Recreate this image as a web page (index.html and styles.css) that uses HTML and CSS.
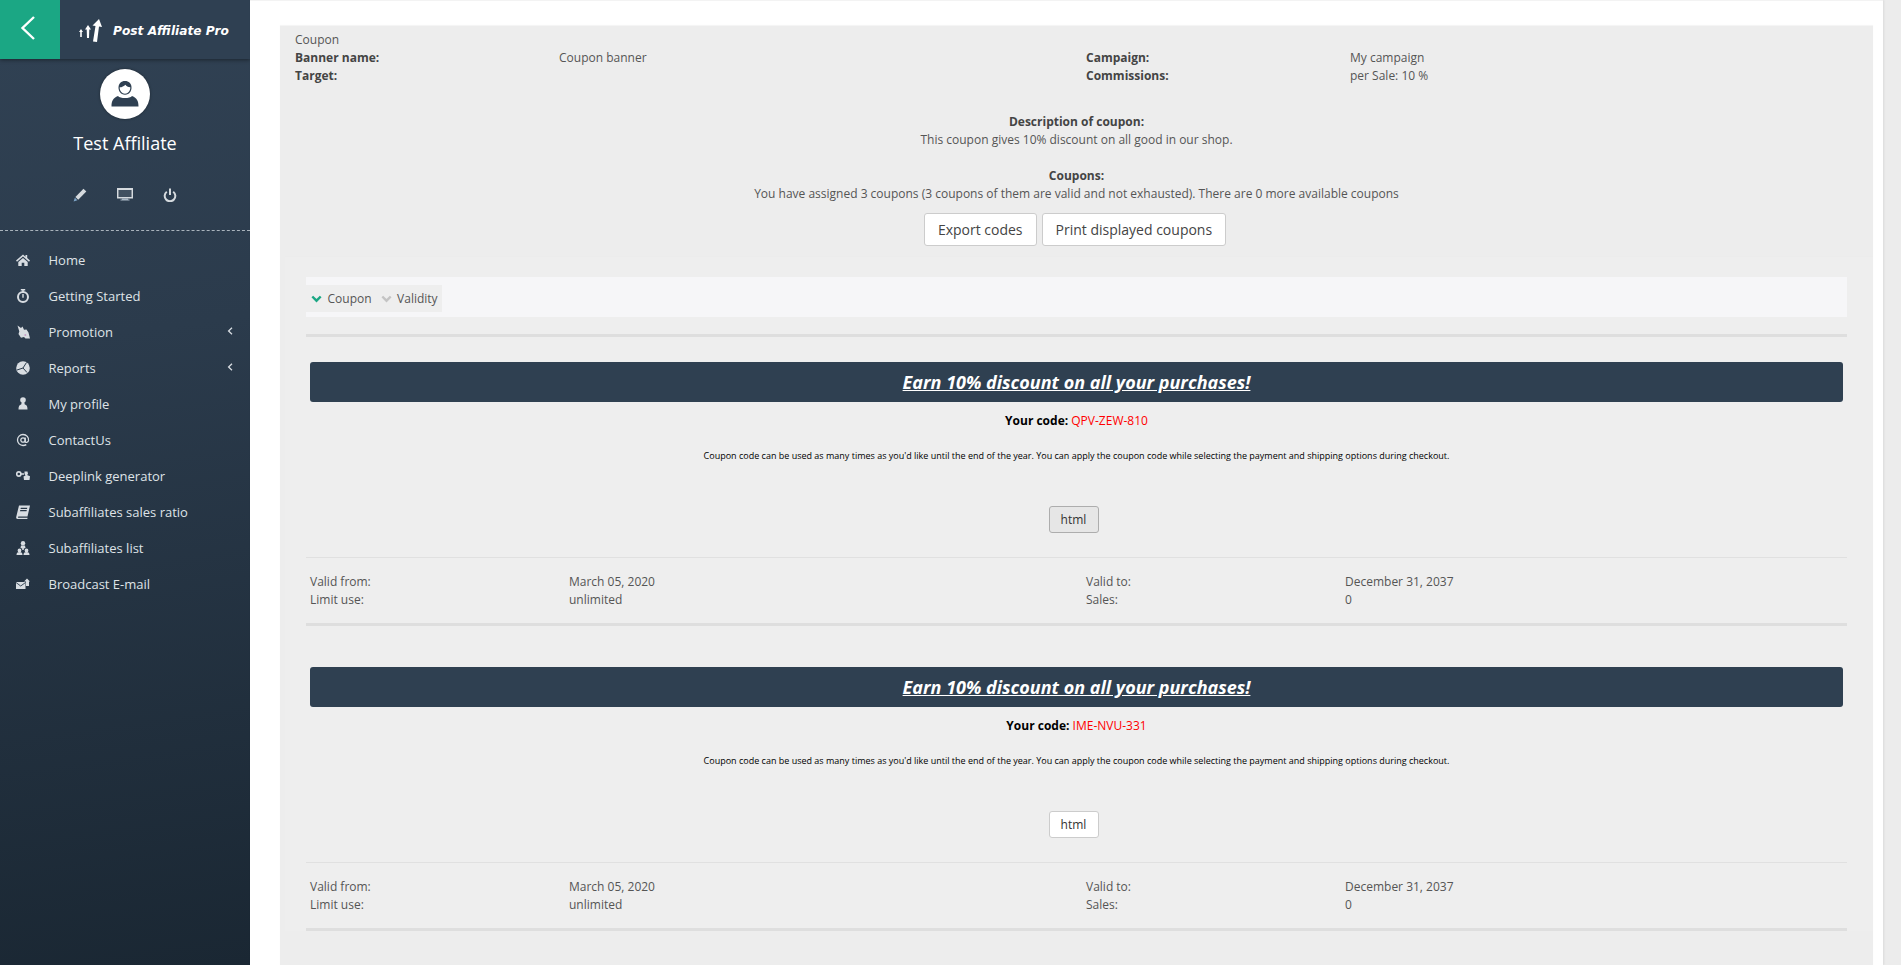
FILE: index.html
```html
<!DOCTYPE html>
<html lang="en">
<head>
<meta charset="utf-8">
<title>Post Affiliate Pro</title>
<link rel="stylesheet" href="styles.css">
</head>
<body>
<aside class="sidebar">
  <div class="topbar">
    <div class="back"><svg width="16" height="26" viewBox="0 0 16 26"><path d="M14 2 2.500 13 14 24" fill="none" stroke="#fff" stroke-width="2.400"/></svg></div>
    <div class="logo">
      <svg width="24" height="24" viewBox="0 0 24 24"><path fill="#fff" d="M3 11 5 14H3.800V19H2.200V14H1ZM10 7 13 11.500H11.300L11 20H9L8.700 11.500H7ZM21 1 24 9 21 8.500 19 24 15 23.500 17.500 8 14.500 7.500Z"/></svg>
      <span class="logo-text">Post Affiliate Pro</span>
    </div>
  </div>
  <div class="avatar"><svg width="28" height="26" viewBox="0 0 28 26"><path fill="#2f4052" d="M14 0c3.800 0 6.500 2.500 6.500 6.500 0 1.600-.4 3.200-1.300 4.500-1.200 1.700-3 2.800-5.200 2.800s-4-1.100-5.200-2.800C7.900 9.700 7.500 8.100 7.500 6.500 7.500 2.500 10.200 0 14 0Z"/><path fill="#fff" d="M8.700 6.300c2.200-.1 4.300-1 5.700-2.600 1 1.400 2.500 2.300 4.900 2.600.2 3.600-2.200 6.400-5.300 6.400S8.500 9.900 8.700 6.300Z"/><path fill="#2f4052" d="M0.500 25.500c0-5.500 1.500-8.500 6.500-10.500 2 2.700 12 2.700 14 0 5 2 6.500 5 6.500 10.500Z"/></svg></div>
  <div class="user-name">Test Affiliate</div>
  <div class="user-tools">
    <svg width="14" height="14" viewBox="0 0 14 14"><path fill="#d5dade" d="M10.500 .8 13.300 3.600 5.200 11.700 2.400 8.900Z"/><path fill="#7fa6c9" d="M1.900 9.800 4.400 12.300 .6 13.500Z"/></svg>
    <svg width="16" height="14" viewBox="0 0 16 14"><path fill="#d5dade" fill-rule="evenodd" d="M0 0h16v10.500H0ZM1.500 2v7h13V2Z"/><path fill="#d5dade" d="M1.500 2h13v7H1.500Z" opacity=".12"/><path fill="#a9b8c5" d="M5 10.500h6v1h1.500v1h-9v-1H5Z"/></svg>
    <svg width="14" height="14" viewBox="0 0 14 14"><path fill="none" stroke="#d5dade" stroke-width="2" d="M3.800 3.700a5.300 5.300 0 1 0 6.400 0"/><path stroke="#d5dade" stroke-width="2" d="M7 .5v6.500"/></svg>
  </div>
  <nav class="menu">
    <a class="item"><svg class="ico" viewBox="0 0 14 14"><path fill="#d8dde2" d="M7 1.500 0 7.500 1 8.700 7 3.600l6 5.100 1-1.200-2.800-2.400V2H9.500v1.800ZM2.300 9 7 5 11.700 9v4H8.300V9.700H5.700V13H2.300Z"/></svg><span>Home</span></a>
    <a class="item"><svg class="ico" viewBox="0 0 14 14"><circle cx="7" cy="8" r="5" fill="none" stroke="#d8dde2" stroke-width="2"/><path fill="#d8dde2" d="M4.800 0h4.400v1.600H4.800ZM6.200 1.500h1.600v1.500H6.200ZM6.300 5h1.400v3.800H6.300Z"/></svg><span>Getting Started</span></a>
    <a class="item"><svg class="ico" viewBox="0 0 14 14"><path fill="#d8dde2" d="M1.500 .5 5 3 6.500 1.500 8 4.800 10.500 4.500 12.500 7.500 14 13.500H9.500L8 12 5 12.800 2.500 9 3.300 6.500Z"/><circle cx="9.300" cy="10" r="1" fill="#c7a0c8"/></svg><span>Promotion</span><svg class="chev" viewBox="0 0 6 8"><path d="M5 .8 1.600 4 5 7.200" fill="none" stroke="#d8dde2" stroke-width="1.300"/></svg></a>
    <a class="item"><svg class="ico" viewBox="0 0 14 14"><circle cx="7" cy="7" r="6.800" fill="#d8dde2"/><path d="M7 7 10.500 1.500M7 7 1 9M7 7 11 11.500" stroke="#2c3d4e" stroke-width="1"/></svg><span>Reports</span><svg class="chev" viewBox="0 0 6 8"><path d="M5 .8 1.600 4 5 7.200" fill="none" stroke="#d8dde2" stroke-width="1.300"/></svg></a>
    <a class="item"><svg class="ico" viewBox="0 0 14 14"><circle cx="7" cy="3" r="2.800" fill="#d8dde2"/><path fill="#d8dde2" d="M5.800 5h2.400l.6 2.500c2 .7 2.700 1.700 2.700 5H2.500c0-3.300.7-4.300 2.700-5Z"/></svg><span>My profile</span></a>
    <a class="item"><svg class="ico" viewBox="0 0 14 14"><circle cx="7" cy="7" r="2.200" fill="none" stroke="#d8dde2" stroke-width="1.300"/><path d="M9.200 4.500V8.500c0 1.400 2.800 1.300 3.300-.8.600-3.200-2-6.200-5.500-6.200A5.500 5.500 0 0 0 7 12.500c1.300 0 2.400-.3 3.300-.9" fill="none" stroke="#d8dde2" stroke-width="1.300"/></svg><span>ContactUs</span></a>
    <a class="item"><svg class="ico" viewBox="0 0 14 14"><circle cx="2.800" cy="5" r="2.100" fill="none" stroke="#d8dde2" stroke-width="1.600"/><path fill="#d8dde2" d="M4.500 4.300h3.500v1.500H4.500ZM8.500 2.500h3l.5 2.500-1 1 3 1.200-.5 3.800H8l-.5-3.500 2-1-1-1.500Z"/></svg><span>Deeplink generator</span></a>
    <a class="item"><svg class="ico" viewBox="0 0 14 14"><path fill="#d8dde2" d="M3 .5h11l-2.500 11H2.600c-.8 0-.8 1.300 0 1.300h9l-.3 1.200H1.500C.3 14 0 13 .2 12ZM4.800 2.800l-.3 1.200h6.500l.3-1.200ZM4.300 5l-.3 1.200h6.500l.3-1.200Z"/></svg><span>Subaffiliates sales ratio</span></a>
    <a class="item"><svg class="ico" viewBox="0 0 14 14"><circle cx="7" cy="2.300" r="2.200" fill="#d8dde2"/><path fill="#d8dde2" d="M5 4.500h4l.5 2.500-1.700.5V9H6.200V7.500L4.500 7ZM3.500 7.500a1.900 1.900 0 0 1 0 3.800 1.900 1.900 0 0 1 0-3.800ZM10.500 7.500a1.900 1.900 0 0 1 0 3.800 1.900 1.900 0 0 1 0-3.800ZM.5 14c0-2 .8-3 3-3s3 1 3 3ZM7.500 14c0-2 .8-3 3-3s3 1 3 3Z"/></svg><span>Subaffiliates list</span></a>
    <a class="item"><svg class="ico" viewBox="0 0 14 14"><path fill="#d8dde2" d="M0 5h9.500v7H0Z"/><path d="M0 5.500 4.700 9 9.500 5.500" fill="none" stroke="#2c3d4e" stroke-width=".9"/><path fill="#d8dde2" d="M11 1.500 14 4.500 13 4.500V9h-3V4.500H8Z"/></svg><span>Broadcast E-mail</span></a>
  </nav>
</aside>

<main class="main">
  <section class="panel">
    <div class="summary">
      <div>Coupon</div>
      <div class="info-grid">
        <b>Banner name:</b><span>Coupon banner</span><b>Campaign:</b><span>My campaign</span>
        <b>Target:</b><span></span><b>Commissions:</b><span>per Sale: 10 %</span>
      </div>
      <div class="desc">
        <b>Description of coupon:</b>
        <div>This coupon gives 10% discount on all good in our shop.</div>
      </div>
      <div class="desc">
        <b>Coupons:</b>
        <div>You have assigned 3 coupons (3 coupons of them are valid and not exhausted). There are 0 more available coupons</div>
      </div>
      <div class="actions"><button class="btn">Export codes</button><button class="btn">Print displayed coupons</button></div>
    </div>
    <div class="inner">
      <div class="tabbar">
        <div class="tabs">
          <svg class="tab-chev" viewBox="0 0 11 8"><path d="M1.300 1.500 5.500 5.700 9.700 1.500" fill="none" stroke="#1ba784" stroke-width="2.400"/></svg><span class="tab-label">Coupon</span>
          <svg class="tab-chev" viewBox="0 0 11 8"><path d="M1.300 1.500 5.500 5.700 9.700 1.500" fill="none" stroke="#c4c4c4" stroke-width="2.400"/></svg><span>Validity</span>
        </div>
      </div>
      <div class="rule-thick"></div>

      <article class="coupon">
        <h2 class="coupon-head">Earn 10% discount on all your purchases!</h2>
        <p class="code"><b>Your code:</b> <span class="red">QPV-ZEW-810</span></p>
        <p class="fine">Coupon code can be used as many times as you'd like until the end of the year. You can apply the coupon code while selecting the payment and shipping options during checkout.</p>
        <div class="fmt"><button class="btn-small is-active">html</button></div>
        <div class="meta">
          <span>Valid from:</span><span>March 05, 2020</span><span>Valid to:</span><span>December 31, 2037</span>
          <span>Limit use:</span><span>unlimited</span><span>Sales:</span><span>0</span>
        </div>
      </article>

      <article class="coupon">
        <h2 class="coupon-head">Earn 10% discount on all your purchases!</h2>
        <p class="code"><b>Your code:</b> <span class="red">IME-NVU-331</span></p>
        <p class="fine">Coupon code can be used as many times as you'd like until the end of the year. You can apply the coupon code while selecting the payment and shipping options during checkout.</p>
        <div class="fmt"><button class="btn-small">html</button></div>
        <div class="meta">
          <span>Valid from:</span><span>March 05, 2020</span><span>Valid to:</span><span>December 31, 2037</span>
          <span>Limit use:</span><span>unlimited</span><span>Sales:</span><span>0</span>
        </div>
      </article>
    </div>
  </section>
</main>
</body>
</html>
```

FILE: styles.css
```css
* { box-sizing: border-box; }
html, body { height: 100%; }
body {
  margin: 0;
  display: flex;
  height: 965px;
  overflow: hidden;
  background: #ececec;
  font-family: "Open Sans", "Liberation Sans", sans-serif;
  font-size: 12px;
  line-height: 18px;
  color: #555;
}
b { font-weight: 700; color: #444; }

/* sidebar */
.sidebar {
  width: 250px;
  flex: none;
  font-size: 13px;
  color: #dfe3e7;
  background: linear-gradient(172deg, #314254 0%, #2b3b4c 35%, #1a2733 100%);
}
.topbar {
  display: flex;
  height: 59px;
  background: #2f4052;
  box-shadow: 0 1px 4px rgba(0, 0, 0, .45);
}
.back {
  width: 60px;
  background: #1ba784;
  display: flex;
  align-items: center;
  padding: 0 0 4px 20px;
}
.logo {
  display: flex;
  align-items: center;
  gap: 11px;
  padding-left: 18px;
}
.logo-text {
  margin-top: 3px;
  font-family: "DejaVu Sans", sans-serif;
  font-style: italic;
  font-weight: 700;
  font-size: 12.200px;
  color: #fff;
}
.avatar {
  width: 50px;
  height: 50px;
  margin: 10px auto 0;
  border-radius: 50%;
  background: #fff;
  box-shadow: 0 0 3px rgba(0, 0, 0, .4);
  display: flex;
  align-items: center;
  justify-content: center;
}
.user-name {
  margin-top: 12px;
  text-align: center;
  font-size: 18px;
  line-height: 24px;
  color: #fff;
}
.user-tools {
  display: flex;
  justify-content: center;
  gap: 30px;
  margin-top: 33px;
  height: 43px;
  border-bottom: 1px dashed #a9b3bc;
}
.menu { padding-top: 11px; }
.item {
  display: flex;
  align-items: center;
  height: 36px;
  padding-left: 16px;
  color: #dfe3e7;
}
.ico { width: 14px; height: 14px; margin-right: 18.500px; flex: none; }
.chev { width: 6px; height: 8px; margin-left: auto; margin-right: 17px; margin-top: -2px; }

/* main */
.main {
  width: 1633px;
  flex: none;
  background: #fff;
  border-top: 1px solid #f3f3f3;
  box-shadow: 1px 0 2px rgba(0, 0, 0, .08);
  padding: 25px 10px 0 30px;
}
.panel {
  background: #ededed;
  box-shadow: 0 -1px 1px rgba(0, 0, 0, .04);
  min-height: 1000px;
}
.summary { padding: 5px 15px 0; height: 230px; }
.info-grid {
  display: grid;
  grid-template-columns: 264px 527px 264px 1fr;
}
.desc { text-align: center; margin-top: 28px; }
.desc + .desc { margin-top: 18px; }
.actions { display: flex; justify-content: center; gap: 5px; margin-top: 10px; padding-right: 3px; }
.btn {
  height: 33px;
  padding: 0 13px;
  font: 14px/1 "Open Sans", sans-serif;
  color: #444;
  background: #fff;
  border: 1px solid #ccc;
  border-radius: 3px;
}
.inner {
  margin-left: 5px;
  padding: 20px 26px 0 21px;
  background: #eee;
  border-top: 1px solid #ececec;
}
.tabbar {
  height: 40px;
  padding-top: 8px;
  background: #f6f6f8;
}
.tabs {
  display: inline-flex;
  align-items: center;
  width: 136px;
  height: 27px;
  padding-left: 5px;
  background: #eee;
}
.tab-chev { width: 11px; height: 8px; margin-right: 5.500px; }
.tab-label { margin-right: 9px; }
.rule-thick { height: 3px; margin-top: 17px; background: #dedede; }

.coupon {
  padding-top: 25px;
  border-bottom: 3px solid #dedede;
  margin-bottom: 16px;
}
.coupon-head {
  margin: 0 4px;
  height: 40px;
  border-radius: 3px;
  background: #2f4051;
  color: #fff;
  text-align: center;
  font-size: 18px;
  font-style: italic;
  font-weight: 700;
  line-height: 40px;
  text-decoration: underline;
}
.code {
  margin: 10px 0 0;
  text-align: center;
  font-size: 12px;
  line-height: 18px;
  color: #000;
}
.code b { color: #000; }
.red { color: #f00; }
.fine {
  margin: 17px 0 0;
  text-align: center;
  font-size: 9px;
  line-height: 18px;
  color: #000;
}
.fmt { margin-top: 41px; padding-right: 6px; text-align: center; }
.btn-small {
  width: 50px;
  height: 27px;
  font: 12px/1 "Open Sans", sans-serif;
  color: #333;
  background: #fff;
  border: 1px solid #ccc;
  border-radius: 3px;
  padding: 0;
}
.btn-small.is-active { background: #e6e6e6; border-color: #adadad; }
.meta {
  display: grid;
  grid-template-columns: 259px 517px 259px 1fr;
  margin-top: 24px;
  padding: 15px 4px 14px;
  border-top: 1px solid #e0e0e0;
}
```
